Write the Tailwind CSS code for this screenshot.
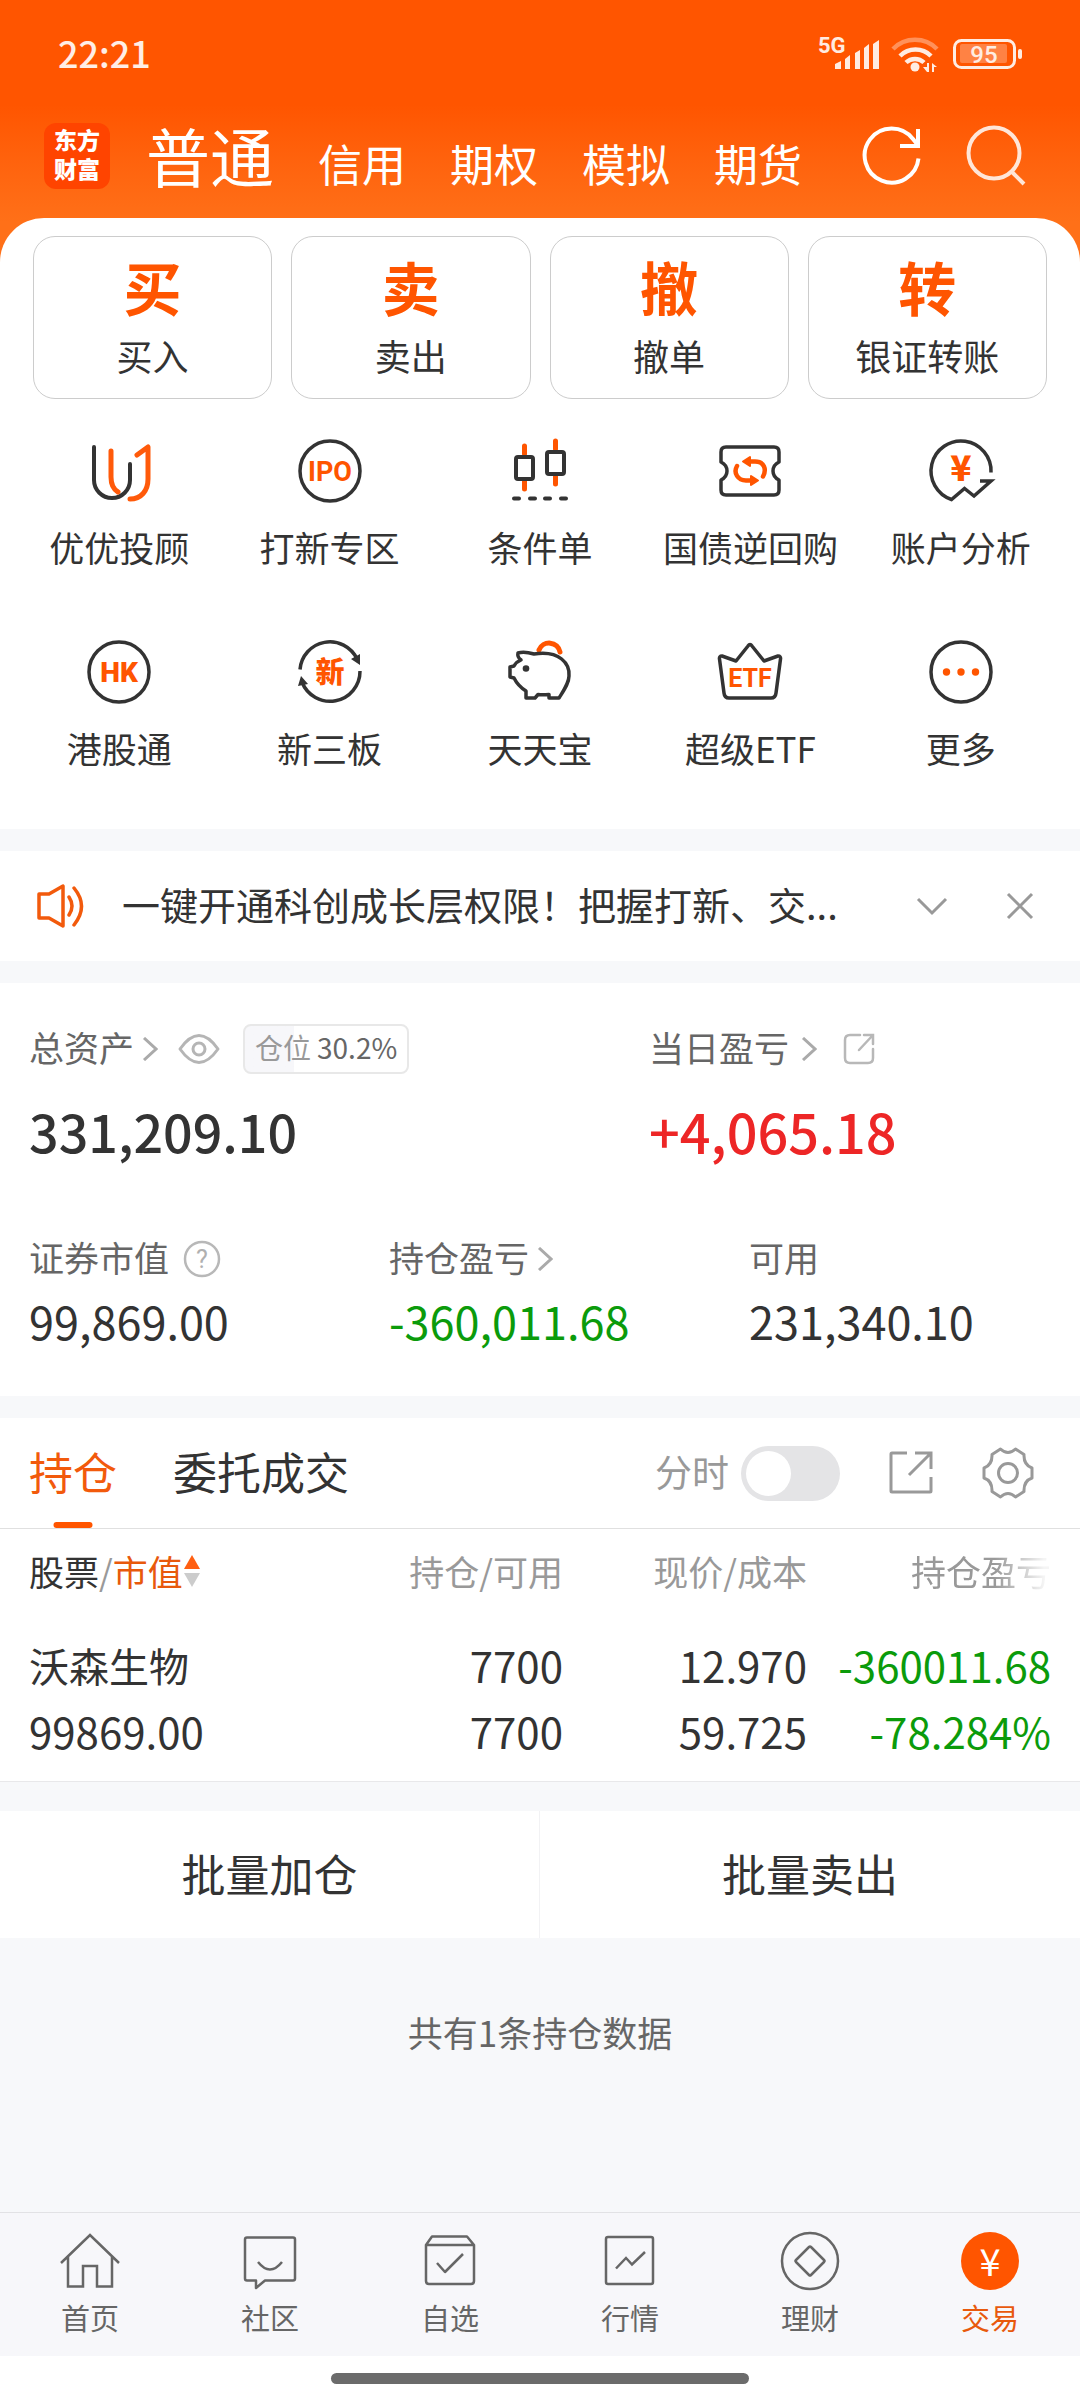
<!DOCTYPE html>
<html lang="zh-CN">
<head>
<meta charset="utf-8">
<meta name="viewport" content="width=device-width, initial-scale=1">
<title>交易</title>
<script src="https://cdn.jsdelivr.net/npm/@tailwindcss/browser@4"></script>
</head>
<body class="flex min-h-screen flex-col bg-[#f7f8fa] font-['Noto_Sans_CJK_SC',sans-serif] text-[#333333]">

<header class="bg-linear-to-b from-[#ff5500] from-40% to-[#ff7018] to-85% pb-[58px] text-white">
  <!-- status bar -->
  <div class="flex h-[104px] items-center justify-between pr-14 pl-[58px]">
    <time class="text-[36px] leading-none font-medium text-white/90">22:21</time>
    <svg class="mt-1 h-10 w-[206px]" viewBox="818 34 206 40" fill="#ffece2" role="img" aria-label="5G 信号，无线网络，电量 95">
      <text x="818" y="53" font-family="Roboto" font-weight="700" font-size="22">5G</text>
      <path d="M835 69v-5l6-3v8zM845 69v-10l5-4v14zM855 69v-16l5-3v19zM864 69v-21l5-4v25zM873 69v-25l6-4v29z"/>
      <g fill="none" stroke="#ffece2" stroke-width="4.500">
        <path d="M893 49a31 31 0 0 1 44 0" opacity=".4"/>
        <path d="M900 56a22 22 0 0 1 31 0"/>
        <path d="M906 62.500a13 13 0 0 1 18 0"/>
        <rect x="954.500" y="40.500" width="60" height="27" rx="7" stroke-width="3"/>
      </g>
      <circle cx="915" cy="67" r="4.500"/>
      <path d="M923 67h4v-4h2v9h-2zM932 63l5 4h-3v5h-2z"/>
      <rect x="960" y="44" width="47" height="19" rx="2" opacity=".3"/>
      <rect x="1018" y="49" width="4" height="10" rx="2"/>
      <text x="984" y="63" font-family="Roboto" font-weight="500" font-size="24" text-anchor="middle">95</text>
    </svg>
  </div>
  <div class="flex h-[100px] items-center pr-[52px] pl-11">
    <a href="#" class="mt-1 flex h-[66px] w-[66px] items-center justify-center rounded-xl bg-[#ff4400] pb-1 text-center text-[23px] leading-[29px] font-black">东方<br>财富</a>
    <nav class="ml-9 flex items-baseline gap-11 pt-2 text-[44px] leading-[88px] whitespace-nowrap">
      <a href="#" class="text-[64px]">普通</a>
      <a href="#">信用</a>
      <a href="#">期权</a>
      <a href="#">模拟</a>
      <a href="#">期货</a>
    </nav>
    <div class="mt-1 ml-auto flex items-center gap-10">
      <button type="button" aria-label="刷新"><svg class="h-16 w-16" viewBox="-32 -32 64 64" fill="none" stroke="#fff" stroke-width="4"><path d="M26.500 2.500A27 27 0 1 1 21-17l4 5M26-27v17H8" /></svg></button>
      <button type="button" aria-label="搜索"><svg class="h-16 w-16" viewBox="-32 -32 64 64" fill="none" stroke="#ffe6d8" stroke-width="4"><circle cx="-2" cy="-3" r="25.500"/><path d="M15 15L28 28"/></svg></button>
    </div>
  </div>
</header>

<main class="-mt-11 flex flex-col rounded-t-[44px] bg-white">
  <!-- trade shortcuts -->
  <div class="grid grid-cols-4 gap-[19px] px-[33px] pt-[18px] whitespace-nowrap">
    <button type="button" class="flex h-[163px] flex-col items-center rounded-[22px] border border-[#cccccc] pt-4"><b class="text-[58px] leading-[66px] font-bold text-[#ff5500]">买</b><span class="mt-3 text-[36px] leading-[48px]">买入</span></button>
    <button type="button" class="flex h-[163px] flex-col items-center rounded-[22px] border border-[#cccccc] pt-4"><b class="text-[58px] leading-[66px] font-bold text-[#ff5500]">卖</b><span class="mt-3 text-[36px] leading-[48px]">卖出</span></button>
    <button type="button" class="flex h-[163px] flex-col items-center rounded-[22px] border border-[#cccccc] pt-4"><b class="text-[58px] leading-[66px] font-bold text-[#ff5500]">撤</b><span class="mt-3 text-[36px] leading-[48px]">撤单</span></button>
    <button type="button" class="flex h-[163px] flex-col items-center rounded-[22px] border border-[#cccccc] pt-4"><b class="text-[58px] leading-[66px] font-bold text-[#ff5500]">转</b><span class="mt-3 text-[36px] leading-[48px]">银证转账</span></button>
  </div>

  <!-- feature grid -->
  <div class="grid grid-cols-5 gap-y-[65px] px-[14px] pt-9 pb-[57px] text-[35px] leading-[48px] whitespace-nowrap">
    <a href="#" class="flex flex-col items-center gap-4"><svg class="h-[72px] w-[72px]" viewBox="-36 -36 72 72" fill="none" stroke="#333" stroke-width="4" stroke-linecap="round" stroke-linejoin="round"><path d="M-25-24V9A18 18 0 0 0 11 9V-7"/><g stroke="#ff5a0a"><path d="M-8-20V6C-8 14-6 18-1 21M18-16L29-24V8C29 20 22 28 11 28" stroke-width="5"/></g></svg><span>优优投顾</span></a>
    <a href="#" class="flex flex-col items-center gap-4"><svg class="h-[72px] w-[72px]" viewBox="-36 -36 72 72"><circle r="30" fill="none" stroke="#333" stroke-width="3.500"/><text y="10" text-anchor="middle" font-family="Roboto" font-weight="700" font-size="27" fill="#ff5500">IPO</text></svg><span>打新专区</span></a>
    <a href="#" class="flex flex-col items-center gap-4"><svg class="h-[72px] w-[72px]" viewBox="-36 -36 72 72" fill="none" stroke="#333" stroke-width="4" stroke-linecap="round"><path d="M-15.500-25v8M-15.500 10v8M15.500-30v8M15.500 5v8" stroke="#ff5500" stroke-width="5"/><rect x="-24" y="-14" width="17" height="22" rx="2"/><rect x="7" y="-19" width="17" height="22" rx="2"/><path d="M-26 27.500h5M-10 27.500h5M5 27.500h5M21 27.500h5"/></svg><span>条件单</span></a>
    <a href="#" class="flex flex-col items-center gap-4"><svg class="h-[72px] w-[72px]" viewBox="-36 -36 72 72" fill="none" stroke="#333" stroke-width="3.500" stroke-linejoin="round"><path d="M-24-24H24Q29-24 29-19V-9Q23-6 23 0T29 9V19Q29 24 24 24H-24Q-29 24-29 19V9Q-23 6-23 0T-29-9V-19Q-29-24-24-24Z"/><g stroke="#ff5500" stroke-width="4.500" stroke-linecap="round"><path d="M-2-9.500H5C14-9.500 17-2 13 5.500M-13-5C-17 2-12 9.500-4 9.500H1"/><path d="M-7-9.500L0-14V-5ZM8 9.500L1 5V14Z" fill="#ff5500" stroke-width="2"/></g></svg><span>国债逆回购</span></a>
    <a href="#" class="flex flex-col items-center gap-4"><svg class="h-[72px] w-[72px]" viewBox="-36 -36 72 72" fill="none" stroke="#333" stroke-width="3.500"><path d="M30 1.500A30 30 0 1 0-9.500 28.500L3.500 17.500 13 25 30 10H19"/><text x="0" y="10" text-anchor="middle" font-family="Noto Sans CJK SC" font-weight="900" font-size="35" fill="#ff5500" stroke="none">¥</text></svg><span>账户分析</span></a>
    <a href="#" class="flex flex-col items-center gap-4"><svg class="h-[72px] w-[72px]" viewBox="-36 -36 72 72"><circle r="30" fill="none" stroke="#333" stroke-width="3.500"/><text y="10" text-anchor="middle" font-family="Roboto" font-weight="900" font-size="28" fill="#ff5500">HK</text></svg><span>港股通</span></a>
    <a href="#" class="flex flex-col items-center gap-4"><svg class="h-[72px] w-[72px]" viewBox="-36 -36 72 72"><path d="M-30-2.500A30 30 0 0 1 27-13M30-1A30 30 0 0 1-28 10" fill="none" stroke="#333" stroke-width="3.500"/><path d="M21-13L30-18V-7ZM-29 4L-22 12-32 14Z" fill="#333"/><text y="10.500" text-anchor="middle" font-family="Noto Sans CJK SC" font-weight="900" font-size="29" fill="#ff5500">新</text></svg><span>新三板</span></a>
    <a href="#" class="flex flex-col items-center gap-4"><svg class="h-[72px] w-[72px]" viewBox="-36 -36 72 72" fill="none" stroke="#333" stroke-width="3.500" stroke-linejoin="round"><path d="M-1-22A11 11 0 0 1 20-20" stroke="#ff5500" stroke-width="5" stroke-linecap="round"/><path d="M-22-19Q-16-21-6-18C20-22 30-8 29 4 29 11 24 18 19 26H9V22.500Q2 23 -2 22.500L-5 26H-14V19Q-22 14-26 6L-30 5V-5L-26-6Q-24-10-19-12-23-15-22-19Z"/><circle cx="-14" cy="-3.500" r="3.300" fill="#333" stroke="none"/></svg><span>天天宝</span></a>
    <a href="#" class="flex flex-col items-center gap-4"><svg class="h-[72px] w-[72px]" viewBox="-36 -36 72 72"><path d="M-2-26Q0-29 2-26L14-11 28-16Q31-16 30.500-13L26 21Q25.500 26 21 26H-21Q-25.500 26-26 21L-30.500-13Q-31-16-28-16L-14-11Z" fill="none" stroke="#333" stroke-width="3.500" stroke-linejoin="round"/><text y="15" text-anchor="middle" font-family="Roboto" font-weight="700" font-size="25" fill="#ff5500">ETF</text></svg><span>超级ETF</span></a>
    <a href="#" class="flex flex-col items-center gap-4"><svg class="h-[72px] w-[72px]" viewBox="-36 -36 72 72"><circle r="30" fill="none" stroke="#333" stroke-width="3.500"/><g fill="#ff5500"><circle cx="-14.500" r="3.700"/><circle r="3.700"/><circle cx="14.500" r="3.700"/></g></svg><span>更多</span></a>
  </div>

  <!-- notice -->
  <div class="flex h-[154px] items-center border-y-[22px] border-[#f7f8fa] pr-11 pl-9">
    <svg class="h-[46px] w-[50px] shrink-0" viewBox="0 0 50 46" fill="none" stroke="#f25a0c" stroke-width="3.500" stroke-linejoin="round" stroke-linecap="round"><path d="M3 11H13L27 3V43L13 35H3Z"/><path d="M33 14Q39 23 33 32M38 5Q53 23 38 42"/></svg>
    <p class="ml-9 min-w-0 flex-1 truncate pb-1 text-[38px] leading-[56px]">一键开通科创成长层权限！把握打新、交...</p>
    <button type="button" class="mr-14 ml-6" aria-label="展开"><svg class="h-8 w-8" viewBox="0 0 32 32" fill="none" stroke="#999" stroke-width="3"><path d="M2 9L16 23 30 9"/></svg></button>
    <button type="button" aria-label="关闭"><svg class="h-8 w-8" viewBox="0 0 32 32" fill="none" stroke="#999" stroke-width="3"><path d="M4 4L28 28M28 4L4 28"/></svg></button>
  </div>

  <!-- account summary -->
  <section class="px-[29px] pt-10 pb-[47px] whitespace-nowrap">
    <div class="grid grid-cols-[620px_1fr]">
      <div>
        <div class="flex h-[52px] items-center text-[35px] leading-[52px] text-[#666666]">
          <a href="#" class="flex items-center gap-2"><span class="pb-1">总资产</span><svg class="h-6 w-4" viewBox="0 0 16 24" fill="none" stroke="#aaa" stroke-width="3"><path d="M2 1L14 12 2 23"/></svg></a>
          <button type="button" class="ml-5" aria-label="隐藏金额"><svg class="h-8 w-[42px]" viewBox="0 0 42 32" fill="none" stroke="#b5b5b5" stroke-width="3"><path d="M2 16Q21-11 40 16 21 43 2 16Z" stroke-linejoin="round"/><circle cx="21" cy="16" r="6"/></svg></button>
          <span class="ml-[23px] flex h-[50px] items-center gap-[6px] rounded-lg border-2 border-[#e8e8e8] bg-linear-to-r from-[#f7f7fa] from-30% to-white to-30% px-[10px] pb-1 text-[28px] leading-none text-[#999999]">仓位<span class="text-[#666666]">30.2%</span></span>
        </div>
        <p class="mt-5 text-[52px] leading-[72px] font-medium">331,209.10</p>
      </div>
      <div>
        <div class="flex h-[52px] items-center text-[35px] leading-[52px] text-[#666666]">
          <a href="#" class="flex items-center gap-3"><span class="pb-1">当日盈亏</span><svg class="h-6 w-4" viewBox="0 0 16 24" fill="none" stroke="#aaa" stroke-width="3"><path d="M2 1L14 12 2 23"/></svg></a>
          <button type="button" class="ml-[26px]" aria-label="分享"><svg class="h-8 w-8" viewBox="0 0 32 32" fill="none" stroke="#b8b8b8" stroke-width="2.500"><path d="M17 2H7Q2 2 2 7V25Q2 30 7 30H25Q30 30 30 25V16M21 2H30V11M30 2L16 17" stroke-linecap="round"/></svg></button>
        </div>
        <p class="mt-5 text-[54px] leading-[72px] font-medium text-[#ed2626]">+4,065.18</p>
      </div>
    </div>
    <dl class="mt-[66px] grid grid-cols-[360px_360px_1fr]">
      <div>
        <dt class="flex h-[52px] items-center gap-[14px] text-[35px] leading-[52px] text-[#666666]"><span class="pb-1">证券市值</span><button type="button" aria-label="说明"><svg class="h-[38px] w-[38px]" viewBox="-19 -19 38 38"><circle r="17" fill="none" stroke="#b8b8b8" stroke-width="2.500"/><text y="9" text-anchor="middle" font-family="Roboto" font-size="25" fill="#b0b0b0">?</text></svg></button></dt>
        <dd class="mt-2 text-[45px] leading-[56px]">99,869.00</dd>
      </div>
      <div>
        <dt class="flex h-[52px] items-center text-[35px] leading-[52px] text-[#666666]"><a href="#" class="flex items-center gap-2"><span class="pb-1">持仓盈亏</span><svg class="h-6 w-4" viewBox="0 0 16 24" fill="none" stroke="#aaa" stroke-width="3"><path d="M2 1L14 12 2 23"/></svg></a></dt>
        <dd class="mt-2 text-[45px] leading-[56px] text-[#0b9b0b]">-360,011.68</dd>
      </div>
      <div>
        <dt class="flex h-[52px] items-center text-[35px] leading-[52px] text-[#666666]"><span class="pb-1">可用</span></dt>
        <dd class="mt-2 text-[45px] leading-[56px]">231,340.10</dd>
      </div>
    </dl>
  </section>

  <!-- holdings toolbar -->
  <div class="flex h-[133px] items-stretch border-t-[22px] border-b border-t-[#f7f8fa] border-b-[#e0e0e0] pr-[46px] pl-[29px] whitespace-nowrap">
    <a href="#" class="relative flex items-center pb-1 text-[44px] leading-none text-[#f25a0c]">持仓<span class="absolute bottom-0 left-1/2 h-[6px] w-[39px] -translate-x-1/2 rounded-full bg-[#ff5500]"></span></a>
    <a href="#" class="ml-14 flex items-center pb-1 text-[44px] leading-none">委托成交</a>
    <div class="ml-auto flex items-center">
      <label for="intraday" class="pb-1 text-[37px] leading-none text-[#999999]">分时</label>
      <input id="intraday" type="checkbox" class="ml-3 h-[55px] w-[99px] appearance-none rounded-full bg-[#e4e4e6] p-[5px] before:block before:size-[45px] before:rounded-full before:bg-white checked:bg-[#ff5500] checked:before:ml-11">
      <button type="button" class="ml-12" aria-label="分享"><svg class="size-[46px]" viewBox="0 0 46 46" fill="none" stroke="#999" stroke-width="3"><path d="M19 3H4Q3 3 3 4V41Q3 42 4 42H42Q43 42 43 41V27M27 3H43V19M43 3L21 25"/></svg></button>
      <button type="button" class="ml-12" aria-label="设置"><svg class="size-[52px]" viewBox="-26 -26 52 52" fill="none" stroke="#999" stroke-width="3" stroke-linejoin="round"><path d="M-7.500-24Q0-17 7.500-24L16-18.500Q15.500-8 24-5V5Q15.500 8 16 18.500L7.500 24Q0 17-7.500 24L-16 18.500Q-15.500 8-24 5V-5Q-15.500-8-16-18.500Z"/><circle r="9.500"/></svg></button>
    </div>
  </div>

  <!-- holdings table -->
  <div class="border-b border-[#e8e8ea] px-[29px] pb-[17px]">
    <table class="w-full table-fixed text-right text-[42px] leading-[66px] whitespace-nowrap">
      <colgroup><col><col class="w-[244px]"><col class="w-[244px]"><col class="w-[244px]"></colgroup>
      <thead class="text-[35px] leading-[52px] text-[#999999]">
        <tr>
          <th scope="col" class="pt-4 pb-[35px] text-left font-normal"><button type="button" class="flex items-center"><span class="text-[#333333]">股票</span>/<span class="text-[#e8590c]">市值</span><svg class="h-8 w-[18px]" viewBox="0 0 18 32"><path d="M9 0L17 14H1Z" fill="#ff5f12"/><path d="M9 32L17 18H1Z" fill="#ccc"/></svg></button></th>
          <th scope="col" class="pt-4 pb-[35px] font-normal">持仓/可用</th>
          <th scope="col" class="pt-4 pb-[35px] font-normal">现价/成本</th>
          <th scope="col" class="pt-4 pb-[35px] font-normal"><span class="[mask-image:linear-gradient(to_right,black_60%,rgba(0,0,0,0.1)_95%)]">持仓盈亏</span></th>
        </tr>
      </thead>
      <tbody>
        <tr><td class="text-left text-[40px]">沃森生物</td><td>7700</td><td>12.970</td><td class="text-[#0b9b0b]">-360011.68</td></tr>
        <tr><td class="text-left">99869.00</td><td>7700</td><td>59.725</td><td class="text-[#0b9b0b]">-78.284%</td></tr>
      </tbody>
    </table>
  </div>

  <div class="grid grid-cols-2 border-t-[29px] border-[#f7f8fa] text-[44px]">
    <button type="button" class="h-[127px] border-r border-[#f2f2f4] pb-1">批量加仓</button>
    <button type="button" class="h-[127px] pb-1">批量卖出</button>
  </div>
</main>

<p class="pt-[68px] text-center text-[35px] leading-[52px] text-[#666666]">共有1条持仓数据</p>

<footer class="mt-auto">
  <nav class="grid h-[144px] grid-cols-6 border-t border-[#e2e2e5] bg-[#f7f7fa] pt-[18px] text-center text-[29px] leading-[40px] text-[#666666]">
    <a href="#" class="flex flex-col items-center gap-[6px]"><svg class="size-[60px]" viewBox="-30 -30 60 60" fill="none" stroke="#666" stroke-width="2.500"><path d="M-29 2L0-26 29 2M-22-4V25.500H-7V5H7V25.500H22V-4"/></svg>首页</a>
    <a href="#" class="flex flex-col items-center gap-[6px]"><svg class="size-[60px]" viewBox="-30 -30 60 60" fill="none" stroke="#666" stroke-width="2.500" stroke-linejoin="round"><path d="M-23-23.500H23Q25-23.500 25-21.500V17.500Q25 19.500 23 19.500H-5L-14 27V19.500H-23Q-25 19.500-25 17.500V-21.500Q-25-23.500-23-23.500Z"/><path d="M-12 1Q0 16 12 1"/></svg>社区</a>
    <a href="#" class="flex flex-col items-center gap-[6px]"><svg class="size-[60px]" viewBox="-30 -30 60 60" fill="none" stroke="#666" stroke-width="2.500" stroke-linejoin="round"><path d="M-24-16L-18-24.500H17L24-16V20Q24 23 21 23H-21Q-24 23-24 20ZM-24-16H24M-13 2L-5 11 13-7"/></svg>自选</a>
    <a href="#" class="flex flex-col items-center gap-[6px]"><svg class="size-[60px]" viewBox="-30 -30 60 60" fill="none" stroke="#666" stroke-width="2.500"><rect x="-24" y="-24" width="47" height="47" rx="2"/><path d="M-14 7.500L-4-3 2 3.500 15-9"/></svg>行情</a>
    <a href="#" class="flex flex-col items-center gap-[6px]"><svg class="size-[60px]" viewBox="-30 -30 60 60" fill="none" stroke="#666" stroke-width="2.500" stroke-linejoin="round"><circle r="28"/><path d="M-1-14Q0-15 1-14L14-1Q15 0 14 1L1 14Q0 15-1 14L-14 1Q-15 0-14-1Z"/></svg>理财</a>
    <a href="#" class="flex flex-col items-center gap-[6px] text-[#e8590c]" aria-current="page"><svg class="size-[60px]" viewBox="-30 -30 60 60"><circle r="29" fill="#ff5500"/><text y="15" text-anchor="middle" font-family="Noto Sans CJK SC" font-size="38" fill="#fff">¥</text></svg>交易</a>
  </nav>
  <div class="flex h-11 justify-center bg-white pt-[17px]"><span class="h-[11px] w-[418px] rounded-full bg-[#6b6b6b]"></span></div>
</footer>
</body>
</html>
